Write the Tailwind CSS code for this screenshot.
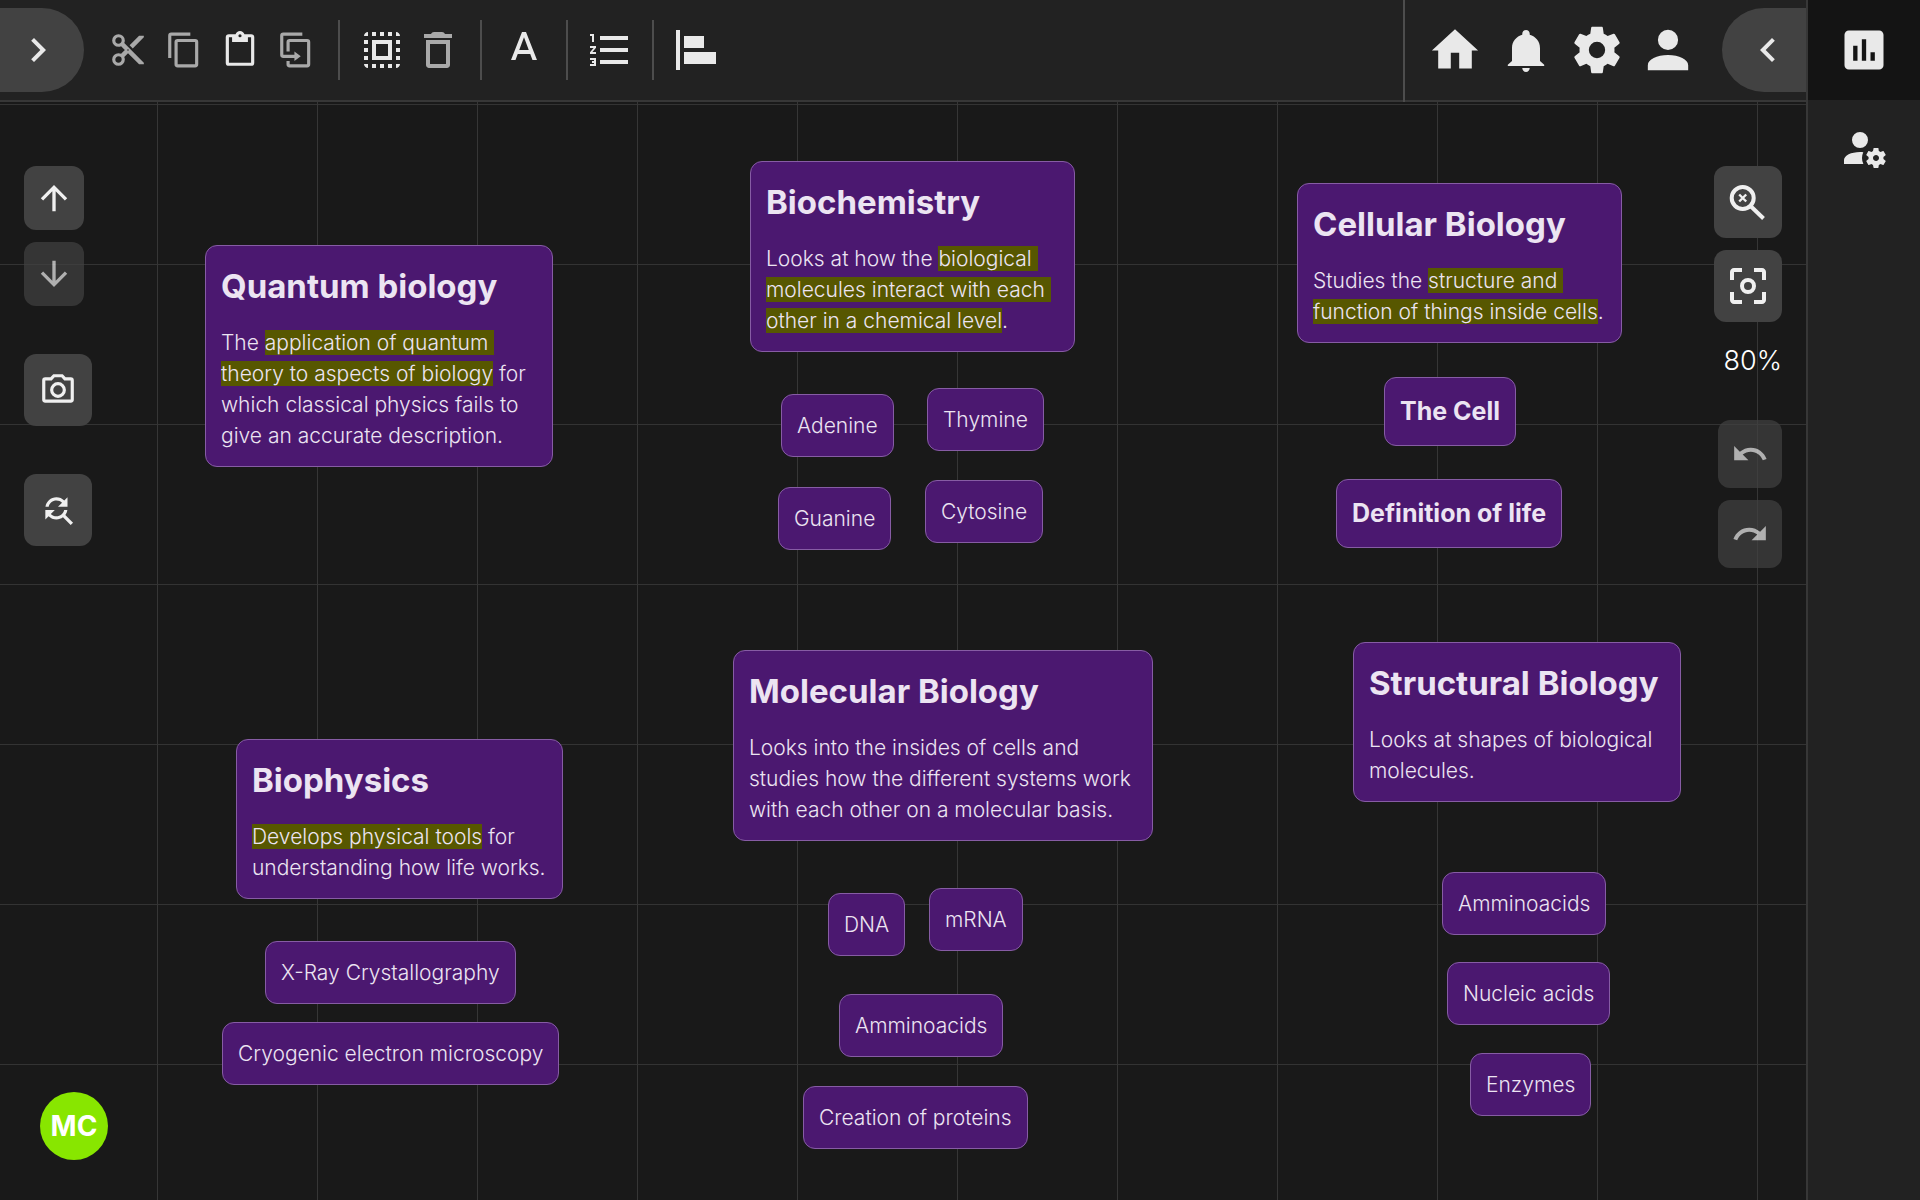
<!DOCTYPE html>
<html lang="en">
<head>
<meta charset="utf-8">
<title>Biology board</title>
<script src="https://cdn.jsdelivr.net/npm/@tailwindcss/browser@4"></script>
</head>
<body class="flex min-h-screen bg-[#191919] font-[Inter,sans-serif] text-[#e9e9e9]">
<div class="flex min-w-0 flex-1 flex-col">

<header class="flex h-[102px] items-center border-b-2 border-[#373737] bg-[#222222]">
  <button aria-label="Expand menu" class="flex h-[84px] w-[84px] items-center rounded-r-full bg-[#424242] pl-[14px]">
    <svg class="size-12" viewBox="0 0 24 24" fill="currentColor"><path d="M10 6L8.59 7.41 13.17 12l-4.58 4.59L10 18l6-6z"/></svg>
  </button>
  <div class="flex items-center gap-[18px] pl-[25px] pr-[23px]">
    <button aria-label="Cut" class="text-[#a9a9a9]" disabled><svg class="size-[38px]" viewBox="0 0 24 24" fill="currentColor"><path d="M19,3L13,9L15,11L22,4V3M12,12.5A0.5,0.5 0 0,1 11.5,12A0.5,0.5 0 0,1 12,11.5A0.5,0.5 0 0,1 12.5,12A0.5,0.5 0 0,1 12,12.5M6,20A2,2 0 0,1 4,18C4,16.89 4.9,16 6,16A2,2 0 0,1 8,18C8,19.11 7.1,20 6,20M6,8A2,2 0 0,1 4,6C4,4.89 4.9,4 6,4A2,2 0 0,1 8,6C8,7.11 7.1,8 6,8M9.64,7.64C9.87,7.14 10,6.59 10,6A4,4 0 0,0 6,2A4,4 0 0,0 2,6A4,4 0 0,0 6,10C6.59,10 7.14,9.87 7.64,9.64L10,12L7.64,14.36C7.14,14.13 6.59,14 6,14A4,4 0 0,0 2,18A4,4 0 0,0 6,22A4,4 0 0,0 10,18C10,17.41 9.87,16.86 9.64,16.36L12,14L19,21H22V20L9.64,7.64Z"/></svg></button>
    <button aria-label="Copy" class="text-[#a9a9a9]" disabled><svg class="size-[38px]" viewBox="0 0 24 24" fill="currentColor"><path d="M19,21H8V7H19M19,5H8A2,2 0 0,0 6,7V21A2,2 0 0,0 8,23H19A2,2 0 0,0 21,21V7A2,2 0 0,0 19,5M16,1H4A2,2 0 0,0 2,3V17H4V3H16V1Z"/></svg></button>
    <button aria-label="Paste"><svg class="size-[38px]" viewBox="0 0 24 24" fill="currentColor"><path d="M19,20H5V4H7V7H17V4H19M12,2A1,1 0 0,1 13,3A1,1 0 0,1 12,4A1,1 0 0,1 11,3A1,1 0 0,1 12,2M19,2H14.82C14.4,0.84 13.3,0 12,0C10.7,0 9.6,0.84 9.18,2H5A2,2 0 0,0 3,4V20A2,2 0 0,0 5,22H19A2,2 0 0,0 21,20V4A2,2 0 0,0 19,2Z"/></svg></button>
    <button aria-label="Duplicate" class="text-[#a9a9a9]" disabled><svg class="size-[38px]" viewBox="0 0 24 24" fill="currentColor"><path d="M11,17H4A2,2 0 0,1 2,15V3A2,2 0 0,1 4,1H16V3H4V15H11V13L15,16L11,19V17M19,21V7H8V13H6V7A2,2 0 0,1 8,5H19A2,2 0 0,1 21,7V21A2,2 0 0,1 19,23H8A2,2 0 0,1 6,21V19H8V21H19Z"/></svg></button>
  </div>
  <div class="flex items-center gap-[18px]">
    <span class="h-[60px] w-[2px] bg-[#4d4d4d]"></span>
    <div class="flex gap-2">
      <button aria-label="Select all"><svg class="size-12" viewBox="0 0 24 24" fill="currentColor"><path d="M3 5h2V3c-1.1 0-2 .9-2 2zm0 8h2v-2H3v2zm4 8h2v-2H7v2zM3 9h2V7H3v2zm10-6h-2v2h2V3zm6 0v2h2c0-1.1-.9-2-2-2zM5 21v-2H3c0 1.1.9 2 2 2zm-2-4h2v-2H3v2zM9 3H7v2h2V3zm2 18h2v-2h-2v2zm8-8h2v-2h-2v2zm0 8c1.1 0 2-.9 2-2h-2v2zm0-12h2V7h-2v2zm0 8h2v-2h-2v2zm-4 4h2v-2h-2v2zm0-16h2V3h-2v2zM7 17h10V7H7v10zm2-8h6v6H9V9z"/></svg></button>
      <button aria-label="Delete" class="text-[#a9a9a9]" disabled><svg class="size-12" viewBox="0 0 24 24" fill="currentColor"><path d="M6 19.5c0 .8.7 1.5 1.5 1.5h9c.8 0 1.5-.7 1.5-1.5V7H6zM8 9h8v10H8zM15.5 4c-.3-.6-.8-1-1.5-1h-4c-.7 0-1.2.4-1.5 1H5v2h14V4z"/></svg></button>
    </div>
    <span class="h-[60px] w-[2px] bg-[#4d4d4d]"></span>
    <button aria-label="Text format"><svg class="size-12" viewBox="0 0 24 24" fill="currentColor"><path d="M11 3L5.5 17h2.25l1.12-3h6.25l1.12 3h2.25L13 3h-2zm-1.38 9L12 5.67 14.38 12H9.62z"/></svg></button>
    <span class="h-[60px] w-[2px] bg-[#4d4d4d]"></span>
    <button aria-label="Numbered list"><svg class="size-12" viewBox="0 0 24 24" fill="currentColor"><path d="M2 17h2v.5H3v1h1v.5H2v1h3v-4H2v1zm1-9h1V4H2v1h1v3zm-1 3h1.8L2 13.1v.9h3v-1H3.2L5 10.9V10H2v1zm5-6v2h14V5H7zm0 14h14v-2H7v2zm0-6h14v-2H7v2z"/></svg></button>
    <span class="h-[60px] w-[2px] bg-[#4d4d4d]"></span>
    <button aria-label="Align left"><svg class="size-12" viewBox="0 0 24 24" fill="currentColor"><path d="M2 2h2v20H2zM6 5h10v6H6zM6 13h16v6H6z"/></svg></button>
  </div>
  <nav class="-mb-[2px] ml-auto flex h-[102px] items-center gap-[15px] border-l-2 border-[#4d4d4d] pb-[2px] pl-[22px] pr-[26px]">
    <a href="#" aria-label="Home"><svg class="size-14" viewBox="0 0 24 24" fill="currentColor"><path d="M10 20v-7h4v7h6V12h3L12 2.5 1 12h3v8z" transform="translate(1.2 .7) scale(.9 .96)"/></svg></a>
    <a href="#" aria-label="Notifications"><svg class="size-14" viewBox="0 0 24 24" fill="currentColor"><path d="M12 3.4c-.9 0-1.6.7-1.6 1.6v.5C7.9 6.2 6 8.3 6 11.2v5.5l-1.8 1.6v.6h15.6v-.6L18 16.7v-5.5c0-2.9-1.9-5-4.4-5.7V5c0-.9-.7-1.6-1.6-1.6zM10.4 19.7h3.2c0 1-.7 1.7-1.6 1.7s-1.6-.7-1.6-1.7z"/></svg></a>
    <a href="#" aria-label="Settings"><svg class="size-14" viewBox="0 0 24 24" fill="currentColor"><path d="M12,15.5A3.5,3.5 0 0,1 8.5,12A3.5,3.5 0 0,1 12,8.5A3.5,3.5 0 0,1 15.5,12A3.5,3.5 0 0,1 12,15.5M19.43,12.97C19.47,12.65 19.5,12.33 19.5,12C19.5,11.67 19.47,11.34 19.43,11L21.54,9.37C21.73,9.22 21.78,8.95 21.66,8.73L19.66,5.27C19.54,5.05 19.27,4.96 19.05,5.05L16.56,6.05C16.04,5.66 15.5,5.32 14.87,5.07L14.5,2.42C14.46,2.18 14.25,2 14,2H10C9.75,2 9.54,2.18 9.5,2.42L9.13,5.07C8.5,5.32 7.96,5.66 7.44,6.05L4.95,5.05C4.73,4.96 4.46,5.05 4.34,5.27L2.34,8.73C2.21,8.95 2.27,9.22 2.46,9.37L4.57,11C4.53,11.34 4.5,11.67 4.5,12C4.5,12.33 4.53,12.65 4.57,12.97L2.46,14.63C2.27,14.78 2.21,15.05 2.34,15.27L4.34,18.73C4.46,18.95 4.73,19.03 4.95,18.95L7.44,17.94C7.96,18.34 8.5,18.68 9.13,18.93L9.5,21.58C9.54,21.82 9.75,22 10,22H14C14.25,22 14.46,21.82 14.5,21.58L14.87,18.93C15.5,18.67 16.04,18.34 16.56,17.94L19.05,18.95C19.27,19.03 19.54,18.95 19.66,18.73L21.66,15.27C21.78,15.05 21.73,14.78 21.54,14.63L19.43,12.97Z"/></svg></a>
    <a href="#" aria-label="Account"><svg class="size-14" viewBox="0.9 0.9 22.2 22.2" fill="currentColor"><path d="M12,4A4,4 0 0,1 16,8A4,4 0 0,1 12,12A4,4 0 0,1 8,8A4,4 0 0,1 12,4M12,14C16.42,14 20,15.79 20,18V20H4V18C4,15.79 7.58,14 12,14Z"/></svg></a>
  </nav>
  <button aria-label="Collapse panel" class="flex h-[84px] w-[84px] items-center rounded-l-full bg-[#424242] pl-[22px]">
    <svg class="size-12" viewBox="0 0 24 24" fill="currentColor"><path d="M15.41 7.41L14 6l-6 6 6 6 1.41-1.41L10.83 12z"/></svg>
  </button>
</header>

<main class="relative flex-1 overflow-hidden bg-[linear-gradient(to_right,#363636_1px,transparent_1px),linear-gradient(to_bottom,#333333_1px,transparent_1px)] bg-[size:160px_160px] bg-[position:157px_2px] text-[21px] font-[350] leading-[31px] text-[#ece4f2]">

  <article class="absolute left-[205px] top-[143px] w-[348px] rounded-xl border border-[#865ca4] bg-[#4b1870] p-[15px]">
    <h2 class="mb-4 text-[33px] font-bold leading-[50px]">Quantum biology</h2>
    <p class="whitespace-break-spaces">The <mark class="bg-[#575700] text-inherit">application of quantum theory to aspects of biology</mark> for which classical physics fails to give an accurate description.</p>
  </article>

  <article class="absolute left-[750px] top-[59px] w-[325px] rounded-xl border border-[#865ca4] bg-[#4b1870] p-[15px]">
    <h2 class="mb-4 text-[33px] font-bold leading-[50px]">Biochemistry</h2>
    <p class="whitespace-break-spaces">Looks at how the <mark class="bg-[#575700] text-inherit">biological molecules interact with each other in a chemical level</mark>.</p>
  </article>
  <div class="absolute left-[781px] top-[292px] rounded-xl border border-[#865ca4] bg-[#4b1870] p-[15px]">Adenine</div>
  <div class="absolute left-[927px] top-[286px] rounded-xl border border-[#865ca4] bg-[#4b1870] p-[15px]">Thymine</div>
  <div class="absolute left-[778px] top-[385px] rounded-xl border border-[#865ca4] bg-[#4b1870] p-[15px]">Guanine</div>
  <div class="absolute left-[925px] top-[378px] rounded-xl border border-[#865ca4] bg-[#4b1870] p-[15px]">Cytosine</div>

  <article class="absolute left-[1297px] top-[81px] w-[325px] rounded-xl border border-[#865ca4] bg-[#4b1870] p-[15px]">
    <h2 class="mb-4 text-[33px] font-bold leading-[50px]">Cellular Biology</h2>
    <p class="whitespace-break-spaces">Studies the <mark class="bg-[#575700] text-inherit">structure and function of things inside cells</mark>.</p>
  </article>
  <h3 class="absolute left-[1384px] top-[275px] rounded-xl border border-[#865ca4] bg-[#4b1870] p-[15px] text-[25px] font-bold leading-[37px]">The Cell</h3>
  <h3 class="absolute left-[1336px] top-[377px] rounded-xl border border-[#865ca4] bg-[#4b1870] p-[15px] text-[25px] font-bold leading-[37px]">Definition of life</h3>

  <article class="absolute left-[236px] top-[637px] w-[327px] rounded-xl border border-[#865ca4] bg-[#4b1870] p-[15px]">
    <h2 class="mb-4 text-[33px] font-bold leading-[50px]">Biophysics</h2>
    <p><mark class="bg-[#575700] text-inherit">Develops physical tools</mark> for understanding how life works.</p>
  </article>
  <div class="absolute left-[265px] top-[839px] rounded-xl border border-[#865ca4] bg-[#4b1870] p-[15px]">X-Ray Crystallography</div>
  <div class="absolute left-[222px] top-[920px] rounded-xl border border-[#865ca4] bg-[#4b1870] p-[15px]">Cryogenic electron microscopy</div>

  <article class="absolute left-[733px] top-[548px] w-[420px] rounded-xl border border-[#865ca4] bg-[#4b1870] p-[15px]">
    <h2 class="mb-4 text-[33px] font-bold leading-[50px]">Molecular Biology</h2>
    <p>Looks into the insides of cells and studies how the different systems work with each other on a molecular basis.</p>
  </article>
  <div class="absolute left-[828px] top-[791px] rounded-xl border border-[#865ca4] bg-[#4b1870] p-[15px]">DNA</div>
  <div class="absolute left-[929px] top-[786px] rounded-xl border border-[#865ca4] bg-[#4b1870] p-[15px]">mRNA</div>
  <div class="absolute left-[839px] top-[892px] rounded-xl border border-[#865ca4] bg-[#4b1870] p-[15px]">Amminoacids</div>
  <div class="absolute left-[803px] top-[984px] rounded-xl border border-[#865ca4] bg-[#4b1870] p-[15px]">Creation of proteins</div>

  <article class="absolute left-[1353px] top-[540px] w-[328px] rounded-xl border border-[#865ca4] bg-[#4b1870] p-[15px]">
    <h2 class="mb-4 text-[33px] font-bold leading-[50px]">Structural Biology</h2>
    <p>Looks at shapes of biological molecules.</p>
  </article>
  <div class="absolute left-[1442px] top-[770px] rounded-xl border border-[#865ca4] bg-[#4b1870] p-[15px]">Amminoacids</div>
  <div class="absolute left-[1447px] top-[860px] rounded-xl border border-[#865ca4] bg-[#4b1870] p-[15px]">Nucleic acids</div>
  <div class="absolute left-[1470px] top-[951px] rounded-xl border border-[#865ca4] bg-[#4b1870] p-[15px]">Enzymes</div>

  <div class="absolute left-6 top-16 flex flex-col items-start gap-12 text-[#f0f0f0]">
    <div class="flex flex-col gap-3">
      <button aria-label="Previous" class="flex h-16 w-[60px] items-center justify-center rounded-xl bg-[#424242]"><svg class="size-10" viewBox="0 0 24 24" fill="currentColor"><path d="M13,20H11V8L5.5,13.5L4.08,12.08L12,4.16L19.92,12.08L18.5,13.5L13,8V20Z"/></svg></button>
      <button aria-label="Next" disabled class="flex h-16 w-[60px] items-center justify-center rounded-xl bg-[#424242] opacity-70"><svg class="size-10" viewBox="0 0 24 24" fill="currentColor"><path d="M11,4H13V16L18.5,10.5L19.92,11.92L12,19.84L4.08,11.92L5.5,10.5L11,16V4Z"/></svg></button>
    </div>
    <button aria-label="Take snapshot" class="flex h-[72px] w-[68px] items-center justify-center rounded-xl bg-[#424242]"><svg class="size-[38px]" viewBox="0 0 24 24" fill="currentColor"><path d="M20,4H16.83L15,2H9L7.17,4H4A2,2 0 0,0 2,6V18A2,2 0 0,0 4,20H20A2,2 0 0,0 22,18V6A2,2 0 0,0 20,4M20,18H4V6H8.05L9.88,4H14.12L15.95,6H20V18M12,7A5,5 0 0,0 7,12A5,5 0 0,0 12,17A5,5 0 0,0 17,12A5,5 0 0,0 12,7M12,15A3,3 0 0,1 9,12A3,3 0 0,1 12,9A3,3 0 0,1 15,12A3,3 0 0,1 12,15Z"/></svg></button>
    <button aria-label="Find and replace" class="flex h-[72px] w-[68px] items-center justify-center rounded-xl bg-[#424242]"><svg class="size-[38px]" viewBox="0 0 24 24" fill="currentColor"><path d="M11,6C12.38,6 13.63,6.56 14.54,7.46L12,10H18V4L15.95,6.05C14.68,4.78 12.93,4 11,4C7.47,4 4.57,6.61 4.08,10H6.1C6.56,7.72 8.58,6 11,6M16.64,15.14C17.3,14.24 17.76,13.17 17.92,12H15.9C15.44,14.28 13.42,16 11,16C9.62,16 8.37,15.44 7.46,14.54L10,12H4V18L6.05,15.95C7.32,17.22 9.07,18 11,18C12.55,18 14,17.5 15.14,16.64L20,21.5L21.5,20L16.64,15.14Z"/></svg></button>
  </div>

  <div class="absolute right-6 top-16 flex flex-col items-end gap-3 text-[#f0f0f0]">
    <button aria-label="Reset zoom" class="flex h-[72px] w-[68px] items-center justify-center rounded-xl bg-[#424242]"><svg class="size-12" viewBox="0 0 48 48" fill="none" stroke="currentColor" stroke-width="4"><circle cx="18.7" cy="20" r="11"/><path d="M26 27.5L39.5 40.5"/><path stroke-width="2.4" d="M15.2 16.5l7 7m0-7l-7 7"/></svg></button>
    <button aria-label="Fit to view" class="flex h-[72px] w-[68px] items-center justify-center rounded-xl bg-[#424242]"><svg class="size-12" viewBox="0 0 24 24" fill="currentColor"><path d="M5 15H3v4c0 1.1.9 2 2 2h4v-2H5v-4zM5 5h4V3H5c-1.1 0-2 .9-2 2v4h2V5zm14-2h-4v2h4v4h2V5c0-1.1-.9-2-2-2zm0 16h-4v2h4c1.1 0 2-.9 2-2v-4h-2v4z"/><path d="M12 8a4 4 0 1 0 0 8 4 4 0 0 0 0-8zm0 6a2 2 0 1 1 0-4 2 2 0 0 1 0 4z"/></svg></button>
    <output class="mb-7 mt-2 block text-[27px] leading-[38px] text-white">80%</output>
    <button aria-label="Undo" disabled class="flex h-[68px] w-16 items-center justify-center rounded-xl bg-[#424242] opacity-70"><svg class="size-[38px]" viewBox="0 0 24 24" fill="currentColor"><path d="M12.5,8C9.85,8 7.45,9 5.6,10.6L2,7V16H11L7.38,12.38C8.77,11.22 10.54,10.5 12.5,10.5C16.04,10.5 19.05,12.81 20.1,16L22.47,15.22C21.08,11.03 17.15,8 12.5,8Z"/></svg></button>
    <button aria-label="Redo" disabled class="flex h-[68px] w-16 items-center justify-center rounded-xl bg-[#424242] opacity-70"><svg class="size-[38px]" viewBox="0 0 24 24" fill="currentColor"><path d="M18.4,10.6C16.55,9 14.15,8 11.5,8C6.85,8 2.92,11.03 1.54,15.22L3.9,16C4.95,12.81 7.95,10.5 11.5,10.5C13.45,10.5 15.23,11.22 16.62,12.38L13,16H22V7L18.4,10.6Z"/></svg></button>
  </div>

  <button class="absolute bottom-10 left-10 flex size-[68px] items-center justify-center rounded-full bg-[#88e600] text-[28px] font-bold leading-none text-white">MC</button>
</main>
</div>

<aside class="flex w-[114px] flex-col border-l-2 border-[#373737] bg-[#222222]">
  <button aria-label="Statistics" class="flex h-[100px] items-center justify-center bg-[#141414]"><svg class="size-[52px]" viewBox="0 0 24 24" fill="currentColor"><path d="M19 3H5c-1.1 0-2 .9-2 2v14c0 1.1.9 2 2 2h14c1.1 0 2-.9 2-2V5c0-1.1-.9-2-2-2zM9 17H7v-7h2v7zm4 0h-2V7h2v10zm4 0h-2v-4h2v4z"/></svg></button>
  <button aria-label="Manage users" class="flex h-24 items-center justify-center"><svg class="size-12" viewBox="0 0 24 24" fill="currentColor"><path d="M10 4A4 4 0 0 0 6 8A4 4 0 0 0 10 12A4 4 0 0 0 14 8A4 4 0 0 0 10 4M17 12C16.84 12 16.76 12.08 16.76 12.24L16.5 13.5C16.28 13.68 15.96 13.84 15.72 14L14.44 13.5C14.36 13.5 14.2 13.5 14.12 13.6L13.16 15.36C13.08 15.44 13.08 15.6 13.24 15.68L14.28 16.5V17.5L13.24 18.32C13.16 18.4 13.08 18.56 13.16 18.64L14.12 20.4C14.2 20.5 14.36 20.5 14.44 20.5L15.72 20C15.96 20.16 16.28 20.32 16.5 20.5L16.76 21.76C16.76 21.92 16.84 22 17 22H19C19.08 22 19.24 21.92 19.24 21.76L19.4 20.5C19.72 20.32 20.04 20.16 20.28 20L21.5 20.5C21.64 20.5 21.8 20.5 21.8 20.4L22.84 18.64C22.92 18.56 22.84 18.4 22.76 18.32L21.72 17.5V16.5L22.76 15.68C22.84 15.6 22.92 15.44 22.84 15.36L21.8 13.6C21.8 13.5 21.64 13.5 21.5 13.5L20.28 14C20.04 13.84 19.72 13.68 19.4 13.5L19.24 12.24C19.24 12.08 19.08 12 19 12H17M10 14C5.58 14 2 15.79 2 18V20H11.68A7 7 0 0 1 11 17A7 7 0 0 1 11.64 14.09C11.11 14.03 10.56 14 10 14M18.04 15.5C18.84 15.5 19.5 16.16 19.5 17.04C19.5 17.84 18.84 18.5 18.04 18.5C17.16 18.5 16.5 17.84 16.5 17.04C16.5 16.16 17.16 15.5 18.04 15.5Z"/></svg></button>
</aside>
</body>
</html>
